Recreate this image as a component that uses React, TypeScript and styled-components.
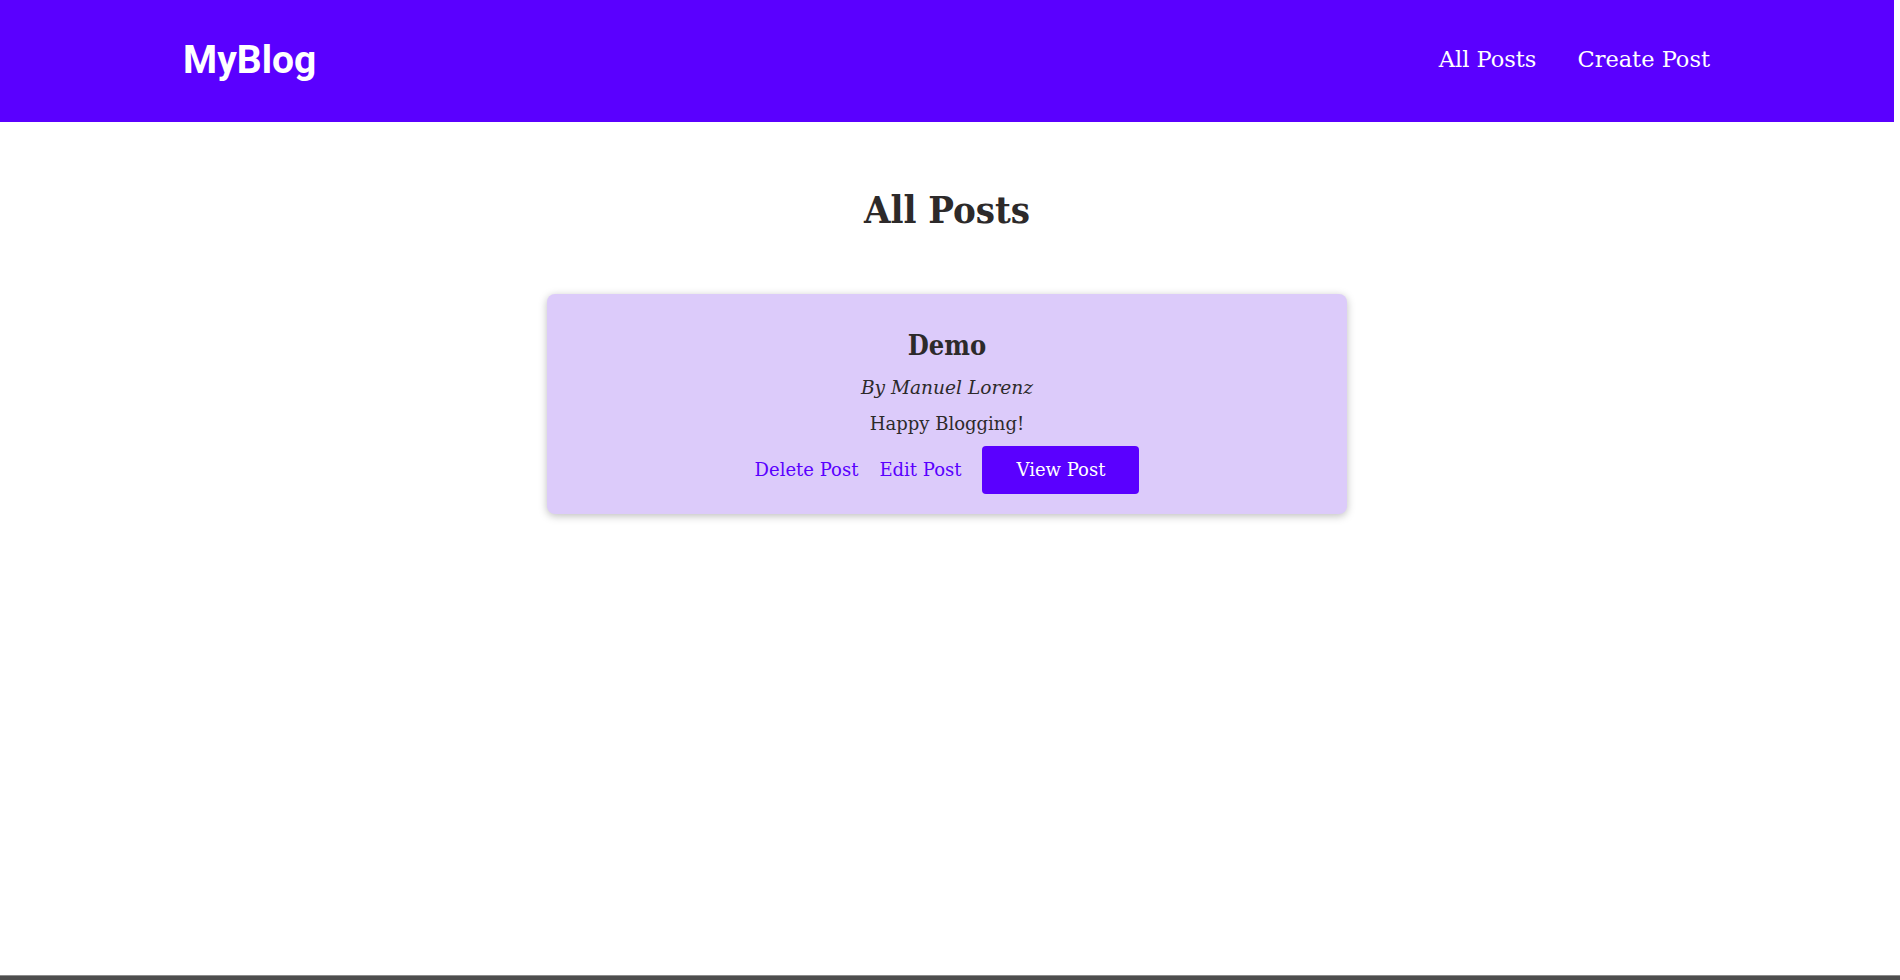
import React from "react";
import styled, { createGlobalStyle } from "styled-components";

const GlobalStyle = createGlobalStyle`
  html, body {
    margin: 0;
    padding: 0;
    background: #ffffff;
  }
  body {
    font-family: "DejaVu Serif", "Liberation Serif", serif;
    color: #2d2a2a;
  }
  * { box-sizing: border-box; }
`;

const Page = styled.div`
  min-height: 100vh;
  display: flex;
  flex-direction: column;
`;

const Content = styled.div`
  flex: 1;
  width: calc(100% - 6px);
  display: flex;
  flex-direction: column;
`;

const Header = styled.header`
  height: 122px;
  background: #5a00ff;
  display: flex;
  align-items: center;
  justify-content: space-between;
  padding: 0 184px 0 183px;
`;

const Logo = styled.a`
  font-family: Roboto, "Liberation Sans", sans-serif;
  font-weight: 700;
  font-size: 39px;
  line-height: 48px;
  color: #ffffff;
  text-decoration: none;
  margin-top: -2px;
`;

const Nav = styled.nav`
  display: flex;
  gap: 41px;
  margin-top: -4px;
`;

const NavLink = styled.a`
  font-size: 22.5px;
  line-height: 28px;
  color: #ffffff;
  text-decoration: none;
`;

const Main = styled.main`
  display: flex;
  flex-direction: column;
  align-items: center;
`;

const Title = styled.h1`
  margin: 65px 0 0;
  font-size: 38px;
  line-height: 46px;
  font-weight: 700;
  font-stretch: condensed;
  color: #2d2a2a;
`;

const Card = styled.article`
  width: 800px;
  margin-top: 61px;
  padding: 16px 16px 20px;
  background: #dccbfa;
  border-radius: 8px;
  box-shadow: 0 2px 8px rgba(0, 0, 0, 0.26);
  display: flex;
  flex-direction: column;
  align-items: center;
  text-align: center;
`;

const PostTitle = styled.h2`
  margin: 19px 0 0;
  font-size: 27px;
  line-height: 34px;
  font-weight: 700;
  font-stretch: condensed;
`;

const Author = styled.p`
  margin: 13px 0 0;
  font-size: 18.6px;
  line-height: 24px;
  font-style: italic;
`;

const Excerpt = styled.p`
  margin: 12px 0 0;
  font-size: 18px;
  line-height: 24px;
`;

const Actions = styled.div`
  margin-top: 10px;
  display: flex;
  align-items: center;
  gap: 21px;
`;

const TextButton = styled.button`
  border: none;
  background: transparent;
  padding: 0;
  font-family: inherit;
  font-size: 18px;
  line-height: 24px;
  color: #5a00ff;
  cursor: pointer;
`;

const PrimaryButton = styled.button`
  border: none;
  border-radius: 4px;
  background: #5a00ff;
  color: #ffffff;
  padding: 12px 34px;
  font-family: inherit;
  font-size: 18px;
  line-height: 24px;
  cursor: pointer;
`;

const BottomEdge = styled.div`
  height: 5px;
  background: #4e4e4e;
  border-top: 1px solid #8c8c8c;
`;

export default function App() {
  return (
    <Page>
      <GlobalStyle />
      <Content>
        <Header>
          <Logo href="#">MyBlog</Logo>
          <Nav>
            <NavLink href="#">All Posts</NavLink>
            <NavLink href="#">Create Post</NavLink>
          </Nav>
        </Header>
        <Main>
          <Title>All Posts</Title>
          <Card>
            <PostTitle>Demo</PostTitle>
            <Author>By Manuel Lorenz</Author>
            <Excerpt>Happy Blogging!</Excerpt>
            <Actions>
              <TextButton>Delete Post</TextButton>
              <TextButton>Edit Post</TextButton>
              <PrimaryButton>View Post</PrimaryButton>
            </Actions>
          </Card>
        </Main>
      </Content>
      <BottomEdge />
    </Page>
  );
}
